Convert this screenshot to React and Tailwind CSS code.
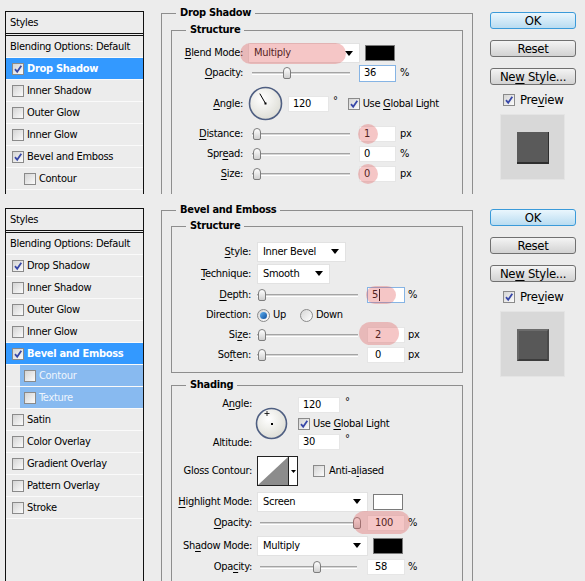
import React from 'react'

const font = "font-['DejaVu_Sans_Condensed','Liberation_Sans',sans-serif]"

const U = ({ children }) => <span className="underline underline-offset-[2px]">{children}</span>

function Check({ on, className = '' }) {
  return (
    <span className={`flex h-[12px] w-[12px] shrink-0 items-center justify-center border border-[#8a8a8a] bg-gradient-to-br from-[#d4d4d4] to-[#fbfbfb] ${className}`}>
      {on && (
        <svg viewBox="0 0 10 10" className="h-[10px] w-[10px]">
          <path d="M2 5.2 L4.2 7.8 L8.3 1.8" fill="none" stroke="#3848a8" strokeWidth="1.8" />
        </svg>
      )}
    </span>
  )
}

function Radio({ on, className = '' }) {
  return (
    <span className={`flex h-[13px] w-[13px] shrink-0 items-center justify-center rounded-full border border-[#8a8a8a] bg-gradient-to-br from-[#d6d6d6] to-white ${className}`}>
      {on && <span className="h-[7px] w-[7px] rounded-full bg-gradient-to-br from-[#5fb0f0] to-[#0b4f9e]" />}
    </span>
  )
}

// Photoshop style list on the left
function StylesList({ items }) {
  return (
    <div className="ml-[5px] mt-[11px] h-[420px] w-[139px] shrink-0 border border-[#111] text-[11px] text-black">
      <div className="flex h-[22px] items-center border-b border-[#111] pl-[4px]">Styles</div>
      <div className="h-[2px] border-b border-[#111]" />
      <div className="flex h-[22px] items-center border-b border-[#fafafa] pl-[4px]">Blending Options: Default</div>
      {items.map((it) => {
        if (it.active) {
          return (
            <div key={it.label} className="flex h-[22px] items-center gap-[3px] border-b border-[#fafafa] bg-[#3399ff] pl-[6px] font-bold text-white">
              <Check on={it.checked} />
              {it.label}
            </div>
          )
        }
        if (it.subActive) {
          return (
            <div key={it.label} className="flex h-[22px] border-b border-[#fafafa] pl-[14px]">
              <div className="flex flex-1 items-center gap-[3px] bg-[#88baf0] pl-[4px] text-[#eef5fd]">
                <Check on={it.checked} />
                {it.label}
              </div>
            </div>
          )
        }
        return (
          <div key={it.label} className={`flex h-[22px] items-center gap-[3px] border-b border-[#fafafa] ${it.sub ? 'pl-[18px]' : 'pl-[6px]'}`}>
            <Check on={it.checked} />
            {it.label}
          </div>
        )
      })}
    </div>
  )
}

function Btn({ primary, className = '', children }) {
  return (
    <div
      className={`flex h-[17px] items-center justify-center rounded-[3px] border text-[13px] leading-none text-black ${
        primary
          ? 'border-[#3a9ad9] bg-gradient-to-b from-[#eaf6fd] to-[#b9dcf1]'
          : 'border-[#707070] bg-gradient-to-b from-[#f4f4f4] to-[#d2d2d2]'
      } ${className}`}
    >
      {children}
    </div>
  )
}

function SideColumn({ bevel }) {
  return (
    <div className="ml-[17px] mt-[12px] flex w-[86px] shrink-0 flex-col">
      <Btn primary>OK</Btn>
      <Btn className="mt-[11px]">Reset</Btn>
      <Btn className="mt-[11px]">Ne<U>w</U>&nbsp;Style...</Btn>
      <div className="mt-[7px] flex h-[16px] items-center gap-[5px] pl-[13px] text-[13px]">
        <Check on />
        <span>Pre<U>v</U>iew</span>
      </div>
      <div className="ml-[10px] mt-[6px] h-[66px] w-[65px] border border-[#e4e4e4] bg-[#d8d8d8] pl-[16px] pt-[17px]">
        {bevel ? (
          <div className="h-[32px] w-[32px] border-[2px] border-t-[#6c6c6c] border-l-[#666] border-r-[#4a4a4a] border-b-[#3c3c3c] bg-[#585858]" />
        ) : (
          <div className="h-[32px] w-[32px] border-b-[2px] border-r border-[#2e2e2e] bg-[#5a5a5a]" />
        )}
      </div>
    </div>
  )
}

function Dropdown({ className = '', children }) {
  return (
    <div className={`flex h-[20px] items-center justify-between border border-[#e2e2e2] bg-white pl-[5px] pr-[6px] ${className}`}>
      <span>{children}</span>
      <svg width="8" height="5" viewBox="0 0 8 5">
        <polygon points="0,0 8,0 4,5" fill="#000" />
      </svg>
    </div>
  )
}

function Slider({ className = '', pos }) {
  return (
    <div className={`relative flex h-[14px] items-center ${className}`}>
      <div className="h-[3px] w-full border-t border-[#a4a4a4] border-b border-b-white bg-[#d6d6d6]" />
      <div
        className="absolute top-[1px] h-[12px] w-[8px] rounded-t-[4px] rounded-b-[2px] border border-[#7d7d7d] bg-gradient-to-b from-white to-[#d0d0d0]"
        style={{ left: pos }}
      />
    </div>
  )
}

function Field({ className = '', focus, children }) {
  return (
    <div className={`flex h-[16px] items-center border bg-white pl-[4px] ${focus ? 'border-[#86b4e4]' : 'border-[#e6e6e6]'} ${className}`}>
      {children}
    </div>
  )
}

const Blob = ({ className }) => <span className={`pointer-events-none absolute rounded-full bg-[#e25c5c]/35 ${className}`} />

function Swatch({ className = '' }) {
  return <div className={`h-[16px] w-[30px] border border-[#7a7a7a] ${className}`} />
}

function Label({ w, children }) {
  return <div className={`${w} shrink-0 text-right`}>{children}</div>
}

function GroupBox({ title, className = '', children }) {
  return (
    <fieldset className={`border border-[#8e8e8e] ${className}`}>
      <legend className="ml-[5px] px-[4px] text-[11px] font-bold leading-[14px]">{title}</legend>
      {children}
    </fieldset>
  )
}

function InnerBox({ title, className = '', children }) {
  return (
    <fieldset className={`border border-[#8e8e8e] ${className}`}>
      <legend className="ml-[14px] px-[4px] text-[11px] font-bold leading-[14px]">{title}</legend>
      {children}
    </fieldset>
  )
}

function DropShadowPanel() {
  const items = [
    { label: 'Drop Shadow', checked: true, active: true },
    { label: 'Inner Shadow' },
    { label: 'Outer Glow' },
    { label: 'Inner Glow' },
    { label: 'Bevel and Emboss', checked: true },
    { label: 'Contour', sub: true },
  ]
  const L = 'w-[71px]'
  return (
    <div className="flex h-[194px] items-start overflow-hidden">
      <StylesList items={items} />
      <GroupBox title="Drop Shadow" className="ml-[17px] mt-[6px] h-[260px] w-[312px] shrink-0 px-[9px]">
        <InnerBox title="Structure" className="mt-[3px] h-[200px]">
          <div className="text-[11px]">
            <div className="relative mt-[6px] flex h-[20px] items-center">
              <Label w={L}><U>B</U>lend Mode:</Label>
              <Dropdown className="ml-[5px] w-[112px]">Multiply</Dropdown>
              <Swatch className="ml-[5px] bg-black" />
              <Blob className="left-[68px] top-0 h-[21px] w-[106px]" />
            </div>
            <div className="flex h-[20px] items-center">
              <Label w={L}><U>O</U>pacity:</Label>
              <Slider className="ml-[9px] w-[98px]" pos={31} />
              <Field focus className="ml-[9px] h-[17px] w-[37px]">36</Field>
              <span className="ml-[4px]">%</span>
            </div>
            <div className="flex h-[41px] items-center">
              <Label w={L}><U>A</U>ngle:</Label>
              <svg width="35" height="35" viewBox="0 0 35 35" className="ml-[5px]">
                <defs>
                  <radialGradient id="dialA" cx="40%" cy="35%" r="70%">
                    <stop offset="0" stopColor="#ffffff" />
                    <stop offset="1" stopColor="#dcdcd4" />
                  </radialGradient>
                </defs>
                <circle cx="17.5" cy="17.5" r="16" fill="url(#dialA)" stroke="#4f5f82" strokeWidth="1.6" />
                <line x1="17.5" y1="17.5" x2="11.8" y2="7.6" stroke="#000" strokeWidth="1" />
                <rect x="16.5" y="16.5" width="2" height="2" fill="#000" />
              </svg>
              <Field className="ml-[5px] w-[41px]">120</Field>
              <span className="ml-[4px] -mt-[6px]">°</span>
              <Check on className="ml-[10px]" />
              <span className="ml-[3px] whitespace-nowrap">Use <U>G</U>lobal Light</span>
            </div>
            <div className="flex h-[20px] items-center">
              <Label w={L}><U>D</U>istance:</Label>
              <Slider className="ml-[9px] w-[98px]" pos={1} />
              <div className="relative ml-[9px]">
                <Field className="w-[37px]">1</Field>
                <Blob className="-left-[1px] -top-[2px] h-[20px] w-[20px]" />
              </div>
              <span className="ml-[4px]">px</span>
            </div>
            <div className="flex h-[20px] items-center">
              <Label w={L}>Spr<U>e</U>ad:</Label>
              <Slider className="ml-[9px] w-[98px]" pos={1} />
              <Field className="ml-[9px] w-[37px]">0</Field>
              <span className="ml-[4px]">%</span>
            </div>
            <div className="flex h-[20px] items-center">
              <Label w={L}><U>S</U>ize:</Label>
              <Slider className="ml-[9px] w-[98px]" pos={1} />
              <div className="relative ml-[9px]">
                <Field className="w-[37px]">0</Field>
                <Blob className="-left-[1px] -top-[2px] h-[20px] w-[20px]" />
              </div>
              <span className="ml-[4px]">px</span>
            </div>
          </div>
        </InnerBox>
      </GroupBox>
      <SideColumn />
    </div>
  )
}

function BevelPanel() {
  const items = [
    { label: 'Drop Shadow', checked: true },
    { label: 'Inner Shadow' },
    { label: 'Outer Glow' },
    { label: 'Inner Glow' },
    { label: 'Bevel and Emboss', checked: true, active: true },
    { label: 'Contour', subActive: true },
    { label: 'Texture', subActive: true },
    { label: 'Satin' },
    { label: 'Color Overlay' },
    { label: 'Gradient Overlay' },
    { label: 'Pattern Overlay' },
    { label: 'Stroke' },
  ]
  const L = 'w-[79px]'
  const S = 'w-[80px]'
  return (
    <div className="mt-[3px] flex h-[384px] items-start overflow-hidden">
      <StylesList items={items} />
      <GroupBox title="Bevel and Emboss" className="ml-[17px] mt-[6px] h-[420px] w-[312px] shrink-0 px-[9px]">
        <InnerBox title="Structure" className="mt-[2px] pb-[7px]">
          <div className="text-[11px]">
            <div className="mt-[8px] flex h-[21px] items-center">
              <Label w={L}><U>S</U>tyle:</Label>
              <Dropdown className="ml-[6px] w-[89px]">Inner Bevel</Dropdown>
            </div>
            <div className="flex h-[23px] items-center">
              <Label w={L}><U>T</U>echnique:</Label>
              <Dropdown className="ml-[6px] w-[73px]">Smooth</Dropdown>
            </div>
            <div className="flex h-[20px] items-center">
              <Label w={L}><U>D</U>epth:</Label>
              <Slider className="ml-[6px] w-[101px]" pos={1} />
              <div className="relative ml-[9px]">
                <Field focus className="w-[38px]">
                  5<span className="ml-[1px] h-[12px] w-px bg-black" />
                </Field>
                <Blob className="-left-[1px] -top-[1px] h-[18px] w-[30px]" />
              </div>
              <span className="ml-[3px]">%</span>
            </div>
            <div className="flex h-[20px] items-center">
              <Label w={L}>Direction:</Label>
              <Radio on className="ml-[6px]" />
              <span className="ml-[3px]">Up</span>
              <Radio className="ml-[14px]" />
              <span className="ml-[3px]">Down</span>
            </div>
            <div className="flex h-[20px] items-center">
              <Label w={L}>Si<U>z</U>e:</Label>
              <Slider className="ml-[6px] w-[101px]" pos={1} />
              <div className="relative ml-[9px]">
                <Field className="w-[38px] pl-[7px]">2</Field>
                <Blob className="-left-[8px] -top-[5px] h-[23px] w-[40px]" />
              </div>
              <span className="ml-[3px]">px</span>
            </div>
            <div className="flex h-[20px] items-center">
              <Label w={L}>So<U>f</U>ten:</Label>
              <Slider className="ml-[6px] w-[101px]" pos={1} />
              <Field className="ml-[9px] w-[38px] pl-[7px]">0</Field>
              <span className="ml-[3px]">px</span>
            </div>
          </div>
        </InnerBox>
        <InnerBox title="Shading" className="mt-[5px] h-[240px]">
          <div className="text-[11px]">
            <div className="mt-[5px] flex h-[53px] items-center">
              <div className={`${S} flex h-full shrink-0 flex-col justify-between text-right`}>
                <span className="leading-[14px]">A<U>n</U>gle:</span>
                <span className="leading-[14px]">Altitude:</span>
              </div>
              <svg width="33" height="33" viewBox="0 0 33 33" className="ml-[3px]">
                <defs>
                  <radialGradient id="dialB" cx="40%" cy="35%" r="70%">
                    <stop offset="0" stopColor="#ffffff" />
                    <stop offset="1" stopColor="#dcdcd4" />
                  </radialGradient>
                </defs>
                <circle cx="16.5" cy="16.5" r="15" fill="url(#dialB)" stroke="#4f5f82" strokeWidth="1.6" />
                <path d="M12 4 V9 M9.5 6.5 H14.5" stroke="#000" strokeWidth="0.8" />
                <rect x="16" y="16" width="2" height="2" fill="#000" />
              </svg>
              <div className="ml-[10px] flex h-full flex-col justify-between">
                <div className="flex items-start">
                  <Field className="w-[42px]">120</Field>
                  <span className="ml-[5px] -mt-[2px]">°</span>
                </div>
                <div className="flex items-center">
                  <Check on />
                  <span className="ml-[3px] whitespace-nowrap">Use <U>G</U>lobal Light</span>
                </div>
                <div className="flex items-start">
                  <Field className="w-[42px]">30</Field>
                  <span className="ml-[5px] -mt-[2px]">°</span>
                </div>
              </div>
            </div>
            <div className="mt-[6px] flex h-[30px] items-center">
              <Label w={S}>Gloss Contour:</Label>
              <div className="ml-[5px] flex h-[30px] w-[41px] border border-[#222] bg-white">
                <svg width="30" height="28" viewBox="0 0 30 28">
                  <polygon points="0,28 30,0 30,28" fill="#8c8c8c" />
                </svg>
                <div className="flex flex-1 items-center justify-center border-l border-[#222]">
                  <svg width="5" height="3" viewBox="0 0 5 3">
                    <polygon points="0,0 5,0 2.5,3" fill="#000" />
                  </svg>
                </div>
              </div>
              <Check className="ml-[15px]" />
              <span className="ml-[4px]">Anti-a<U>l</U>iased</span>
            </div>
            <div className="mt-[5px] flex h-[21px] items-center">
              <Label w={S}><U>H</U>ighlight Mode:</Label>
              <Dropdown className="ml-[5px] w-[111px]">Screen</Dropdown>
              <Swatch className="ml-[5px] h-[15px] bg-white" />
            </div>
            <div className="flex h-[22px] items-center">
              <Label w={S}><U>O</U>pacity:</Label>
              <Slider className="ml-[8px] w-[97px]" pos={93} />
              <div className="relative ml-[10px]">
                <Field className="w-[38px] pl-[7px]">100</Field>
                <Blob className="-left-[14px] -top-[4px] h-[23px] w-[57px]" />
              </div>
              <span className="ml-[3px]">%</span>
            </div>
            <div className="flex h-[23px] items-center">
              <Label w={S}>Sh<U>a</U>dow Mode:</Label>
              <Dropdown className="ml-[5px] w-[111px]">Multiply</Dropdown>
              <Swatch className="ml-[5px] h-[15px] bg-black" />
            </div>
            <div className="flex h-[20px] items-center">
              <Label w={S}>Opa<U>c</U>ity:</Label>
              <Slider className="ml-[8px] w-[97px]" pos={53} />
              <Field className="ml-[10px] w-[38px] pl-[7px]">58</Field>
              <span className="ml-[3px]">%</span>
            </div>
          </div>
        </InnerBox>
      </GroupBox>
      <SideColumn bevel />
    </div>
  )
}

export default function App() {
  return (
    <div className={`h-[581px] w-[585px] overflow-hidden bg-[#ececec] text-[11px] leading-[14px] tracking-[-0.3px] text-black ${font}`}>
      <DropShadowPanel />
      <BevelPanel />
    </div>
  )
}
